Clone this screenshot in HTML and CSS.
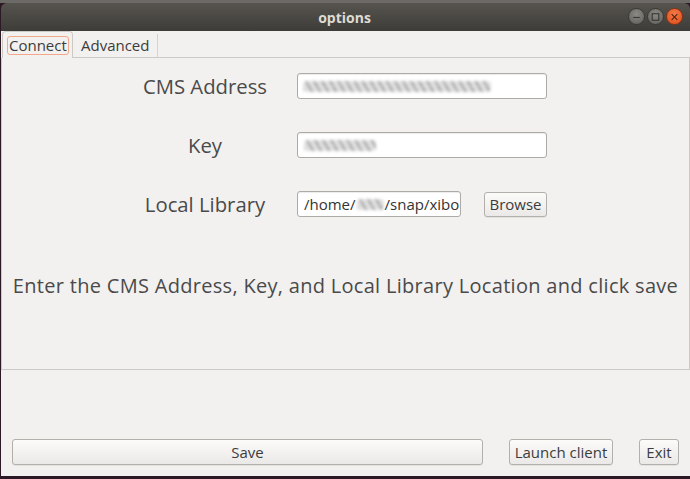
FILE: index.html
```html
<!DOCTYPE html>
<html>
<head>
<meta charset="utf-8">
<link rel="stylesheet" href="styles.css">
</head>
<body>
<div class="desk-top"></div>
<div class="window">
  <div class="titlebar">
    <span class="title">options</span>
    <div class="wm-buttons">
      <span class="wm wm-min"><svg width="16" height="16" viewBox="0 0 16 16"><line x1="4.5" y1="8.5" x2="11.5" y2="8.5" stroke="#3a3935" stroke-width="1.2"/></svg></span>
      <span class="wm wm-max"><svg width="16" height="16" viewBox="0 0 16 16"><rect x="4.5" y="4.5" width="7" height="7" fill="none" stroke="#3a3935" stroke-width="1.2"/></svg></span>
      <span class="wm wm-close"><svg width="16" height="16" viewBox="0 0 16 16"><path d="M5 5 L11 11 M11 5 L5 11" stroke="#5a2410" stroke-width="1.3"/></svg></span>
    </div>
  </div>
  <div class="client">
    <div class="tabs">
      <div class="tab tab-active"><span class="focus">Connect</span></div>
      <div class="tab tab-idle">Advanced</div>
      <div class="tab-fill"></div>
    </div>
    <div class="pane">
      <div class="form">
        <div class="label">CMS Address</div>
        <div class="input wide"><span class="redact r1"></span></div>
        <div class="label">Key</div>
        <div class="input wide"><span class="redact r2"></span></div>
        <div class="label">Local Library</div>
        <div class="input path">/home/<span class="redact r3"></span>/snap/xibo</div>
        <div class="btn browse">Browse</div>
      </div>
      <div class="message">Enter the CMS Address, Key, and Local Library Location and click save</div>
    </div>
    <div class="actions">
      <div class="btn save">Save</div>
      <div class="btn launch">Launch client</div>
      <div class="btn exit">Exit</div>
    </div>
  </div>
</div>
</body>
</html>
```
FILE: styles.css
```css
html, body {
  margin: 0;
  padding: 0;
}
body {
  width: 690px;
  height: 479px;
  overflow: hidden;
  background: #2b1a25;
  font-family: "Open Sans", "DejaVu Sans", sans-serif;
  color: #3c3c3c;
}
.desk-top {
  height: 3px;
  background: #6b6a66;
}
.window {
  margin-left: 1px;
  width: 689px;
  height: 473px;
  display: flex;
  flex-direction: column;
}
.titlebar {
  height: 28px;
  flex: none;
  border-radius: 6px 6px 0 0;
  background: linear-gradient(#57544f, #3d3c38);
  display: flex;
  align-items: center;
  justify-content: center;
  position: relative;
}
.title {
  color: #dfdbd2;
  font-weight: bold;
  font-size: 14px;
  margin-left: -2px;
}
.wm-buttons {
  position: absolute;
  right: 7px;
  top: 5px;
  display: flex;
  gap: 2px;
}
.wm {
  width: 17px;
  height: 17px;
  border-radius: 50%;
  display: flex;
  align-items: center;
  justify-content: center;
  box-sizing: border-box;
  border: 1px solid #3a3935;
}
.wm-min, .wm-max {
  background: radial-gradient(circle at 50% 35%, #8c8a84, #5f5d58);
}
.wm-close {
  background: radial-gradient(circle at 50% 35%, #f47b4a, #df4a15);
  border-color: #8a3315;
}
.client {
  flex: 1;
  background: #f2f1f0;
  display: flex;
  flex-direction: column;
}
.tabs {
  display: flex;
  height: 27px;
  padding-left: 1px;
  flex: none;
}
.tab {
  font-size: 15px;
  box-sizing: border-box;
  color: #3c3c3c;
}
.tab-active {
  width: 71px;
  height: 27px;
  border: 1px solid #cdcac5;
  border-bottom: none;
  border-radius: 4px 4px 0 0;
  padding: 3px 0 0 4px;
  background: #f2f1f0;
}
.focus {
  display: inline-block;
  border: 1px solid #f2a88a;
  border-radius: 3px;
  padding: 0 1px;
  line-height: 17px;
  height: 17px;
}
.tab-idle {
  width: 85px;
  margin-top: 3px;
  height: 24px;
  border-right: 1px solid #d6d3cf;
  border-bottom: 1px solid #cdcac5;
  padding: 3px 0 0 8px;
  line-height: 17px;
}
.tab-fill {
  flex: 1;
  border-bottom: 1px solid #cdcac5;
}
.pane {
  height: 312px;
  flex: none;
  box-sizing: border-box;
  border: 1px solid #cdcac5;
  border-top: none;
  display: flex;
  flex-direction: column;
}
.form {
  display: grid;
  grid-template-columns: 184px 164px 23px 63px;
  grid-auto-rows: 26px;
  row-gap: 33px;
  padding-left: 111px;
  padding-top: 15px;
  align-items: center;
}
.label {
  font-size: 20.3px;
  color: #4a4a4a;
  text-align: center;
  padding-left: 0;
}
.input {
  height: 26px;
  box-sizing: border-box;
  background: #fff;
  border: 1px solid #aeaba6;
  border-radius: 3px;
  box-shadow: inset 0 1px 1px rgba(0,0,0,0.08);
  display: flex;
  align-items: center;
  overflow: hidden;
  white-space: nowrap;
}
.wide {
  grid-column: 2 / 5;
}
.path {
  grid-column: 2 / 3;
  font-size: 15px;
  color: #333;
  padding-left: 6px;
}
.redact {
  display: inline-block;
  height: 11px;
  background: repeating-linear-gradient(60deg, #8f8f8f 0 2px, #d8d8d8 2px 7px);
  filter: blur(1.6px);
  opacity: 0.8;
  border-radius: 4px;
}
.r1 { width: 188px; margin-left: 5px; }
.r2 { width: 72px; margin-left: 6px; }
.r3 { width: 27px; margin: 0 1px; }
.btn {
  box-sizing: border-box;
  height: 26px;
  border: 1px solid #b3b0ab;
  border-radius: 3px;
  background: linear-gradient(#fbfbfa, #ebe9e7);
  box-shadow: 0 1px 0 rgba(0,0,0,0.06);
  font-size: 15px;
  color: #3c3c3c;
  display: flex;
  align-items: center;
  justify-content: center;
  white-space: nowrap;
}
.browse {
  grid-column: 4 / 5;
  height: 25px;
}
.message {
  margin-top: 55px;
  font-size: 20px;
  letter-spacing: 0.3px;
  color: #4a4a4a;
  text-align: center;
  white-space: nowrap;
}
.actions {
  display: flex;
  padding: 69px 0 0 11px;
}
.save { width: 471px; }
.launch { width: 104px; margin-left: 26px; }
.exit { width: 40px; margin-left: 26px; }
```
